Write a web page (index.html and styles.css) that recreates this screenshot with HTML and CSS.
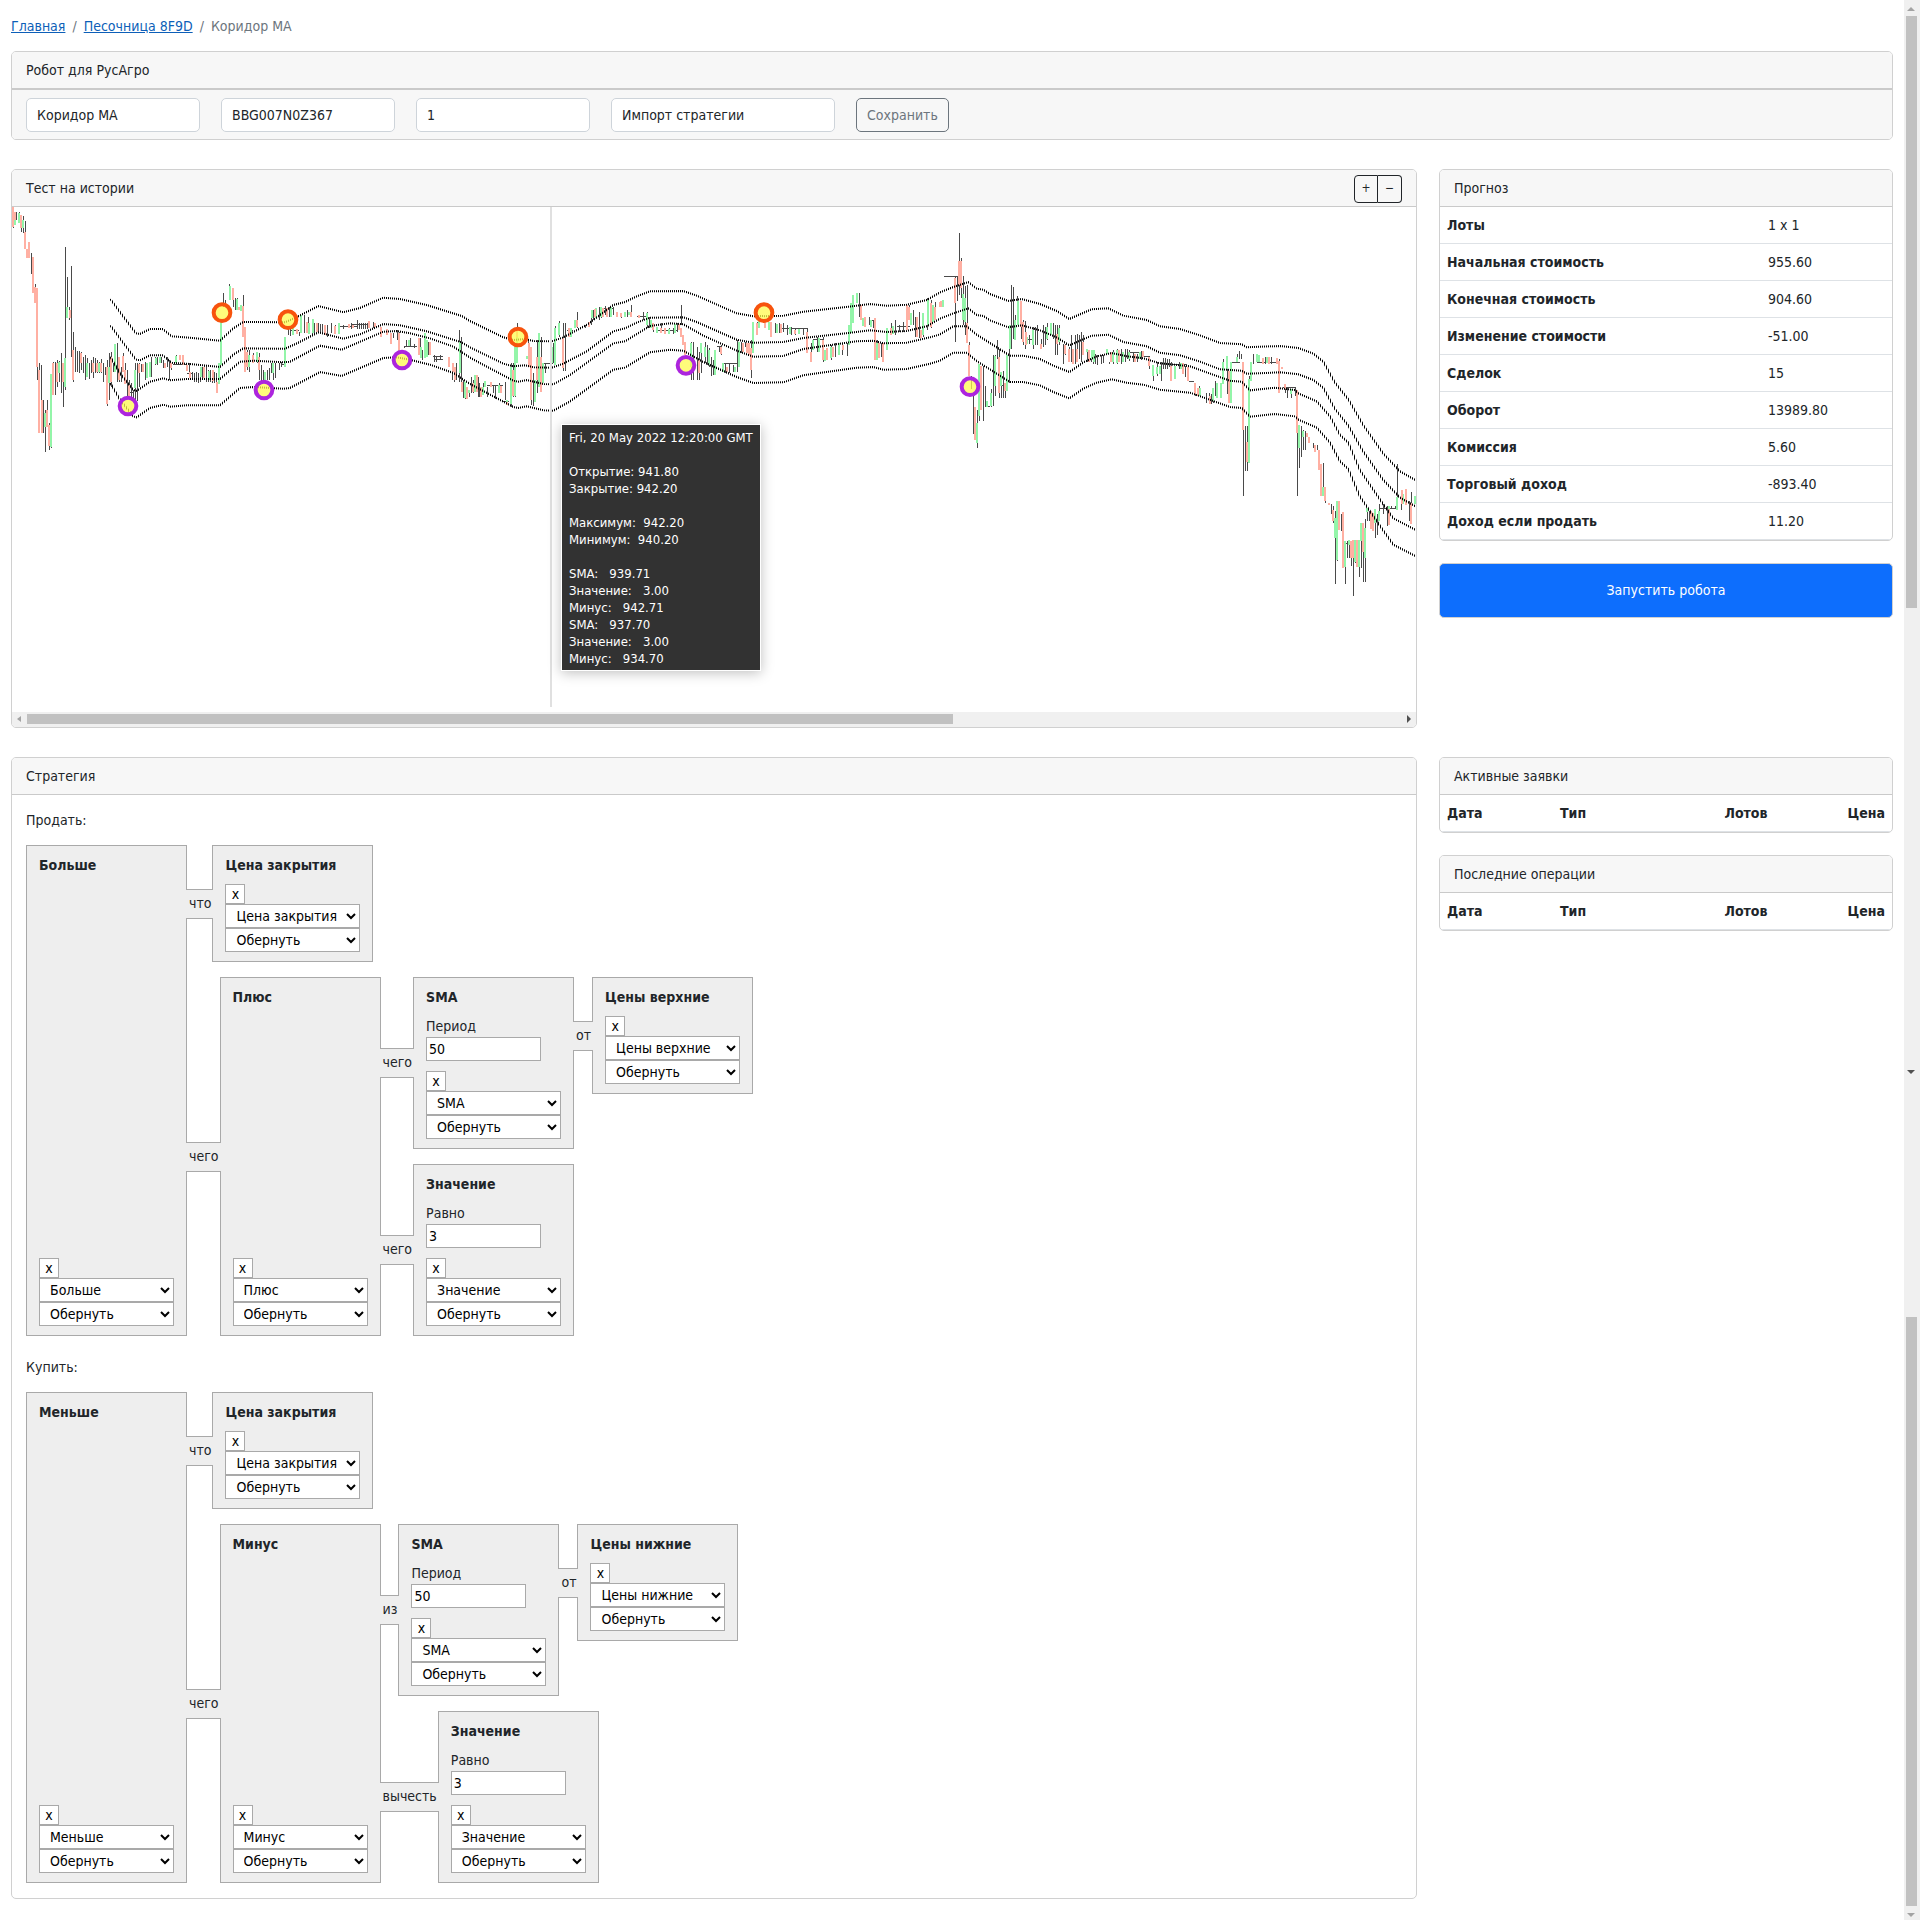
FILE: index.html
```
<!DOCTYPE html>
<html lang="ru">
<head>
<meta charset="utf-8">
<meta name="viewport" content="width=device-width, initial-scale=1">
<title>Коридор МА</title>
<link rel="stylesheet" href="styles.css">
</head>
<body>
<main class="page">
  <nav class="breadcrumb" aria-label="Навигация">
    <a href="#">Главная</a><span class="sep">/</span><a href="#">Песочница 8F9D</a><span class="sep">/</span><span class="current">Коридор МА</span>
  </nav>

  <section class="card robot">
    <header class="card-header">Робот для РусАгро</header>
    <form class="robot-form">
      <input class="field" type="text" value="Коридор МА" aria-label="Название">
      <input class="field" type="text" value="BBG007N0Z367" aria-label="FIGI">
      <input class="field" type="text" value="1" aria-label="Лоты">
      <input class="field field-wide" type="text" value="Импорт стратегии" aria-label="Импорт стратегии">
      <button class="btn-save" type="button">Сохранить</button>
    </form>
  </section>

  <div class="row">
    <section class="card wide">
      <header class="card-header with-tools">
        <span>Тест на истории</span>
        <span class="zoom"><button type="button">+</button><button type="button">−</button></span>
      </header>
      <div class="chart">
        <svg class="chart-svg" viewBox="0 0 4212 1515" role="img" aria-label="График цены">
          <defs>
            <pattern id="dots" width="6" height="6" patternUnits="userSpaceOnUse"><rect width="3" height="6" fill="#000"/></pattern>
            <g id="candles-a">
              <path class="w" d="M40 75V84M50 36V60M58 36V70M65 50V95M70 48V100M76 62V96M94 160V222M106 252V282M112 490V540M118 490V650M124 495V700M130 600V700M136 630V755M142 600V680M148 670V750M154 690V745M160 486V585M166 486V585M172 480V560M178 482V545M184 460V580M190 530V622M196 141V570M202 230V355M208 320V360M214 198V470M220 395V545M226 440V515M232 452V515M238 452V520M244 455V510M250 470V520M256 465V540M262 475V530M268 490V538M274 480V520M280 470V535M286 475V518M292 480V518M298 485V520M304 478V520M310 490V545M316 500V525M322 480V617M328 460V600M334 455V560M340 490V515M352 430V545M358 490V545M364 500V545M370 460V515M376 490V540M382 510V600M388 540V600M394 550V590M400 570V600M406 490V600M412 490V602M418 488V560M424 492V515M430 492V515M436 485V540M454 470V530M466 470V495M472 470V495M484 470V490M490 480V505M502 470V500M508 480V540M514 490V510M528 465V490M568 490V525M576 515V535M582 518V545M588 515V545M594 520V548M600 515V545M606 500V535M612 495V520M618 498V545M624 510V545M630 510V545M636 510V548M642 515V548M648 520V560M670 280V320M676 300V320M688 252V300M700 270V320M706 295V330M712 295V330M730 285V320M736 380V410M742 450V510M748 450V515M760 460V480M772 455V490M778 460V540M784 495V545M790 510V545M796 515V545M802 510V540M808 505V540M814 490V520M820 490V540M826 490V535M838 490V510M844 485V500M865 380V405M871 385V408M880 385V405M898 395V408M914 345V400M926 352V400M938 357V405M944 370V405M956 370V395M962 372V398M968 372V400M982 375V410M994 370V400M1006 375V402M1030 375V388M1054 370V388M1072 360V386M1078 368V388M1084 370V388M1090 370V388M1096 368V386M1102 370V388M1120 365V385M1144 380V412M1162 390V405M1180 400V415M1192 390V420M1198 395V460M1212 438V445M1220 420V440M1232 415V440M1244 432V445M1262 415V475M1268 450V480M1274 400V475M1286 425V465M1304 465V485M1310 470V487M1322 465V480M1346 470V500M1358 490V540M1364 500V545M1370 490V540M1378 390V545M1384 410V550M1390 540V595M1396 550V597M1408 575V590M1414 530V570M1420 540V580M1434 530V590"/>
              <path class="w" d="M380 578H398M520 492H560M560 520H580M845 492H856M870 392H898M1018 380H1070M1055 374H1110M1212 440H1250M1298 470H1330M1306 478H1330"/>
              <path class="g" d="M44 36V75M56 40V68M68 60V85M154 522V740M136 640V680M178 485V520M196 475V560M202 322V355M262 490V530M298 488V515M328 500V550M346 432V515M406 510V565M440 490V535M450 485V530M468 473V492M480 470V490M528 468V488M604 500V530M628 512V540M657 490V552M663 365V495M690 258V300M710 298V330M724 315V332M748 465V500M770 455V485M796 515V545M820 490V520M856 410V500M880 385V405M904 345V398M928 370V402M938 358V400M1016 368V402M1226 420V438M1262 440V475M1274 400V475M1280 420V470M1380 425V520M1396 545V595M1408 570V580M1424 525V575"/>
              <path class="r" d="M39 22V80M46 36V60M62 45V85M76 95V148M82 148V174M87 126V174M98 172V280M106 260V310M112 264V500M118 510V700M127 600V700M142 630V680M148 675V738M160 490V585M172 490V545M190 490V545M210 330V355M220 450V540M244 460V490M280 490V515M292 490V515M304 490V515M322 500V612M334 470V545M356 470V540M368 468V515M376 510V552M388 555V590M418 492V520M430 492V515M496 490V505M514 490V505M540 465V480M548 465V495M562 495V512M570 515V535M612 500V535M638 510V542M651 545V580M698 264V300M718 320V330M730 318V410M736 380V515M742 455V500M760 465V490M778 470V510M890 388V402M920 365V400M950 370V395M974 374V404M1006 378V402M1048 373V385M1060 375V385M1108 362V385M1126 368V382M1144 382V410M1162 388V404M1174 400V432M1196 400V455M1258 415V465M1290 425V465M1346 470V500M1358 490V515M1366 500V540M1386 545V575M1400 560V597M1430 525V560"/>
            </g>
            <g id="candles-b">
              <path class="w" d="M4 550V580M28 550V590M40 550V585M52 560V590M70 555V580M76 555V598M88 550V580M106 545V600M124 490V620M130 490V590M136 445V590M142 368V400M176 420V440M184 440V615M190 520V617M202 420V580M214 410V575M226 490V520M244 430V490M250 430V490M256 378V440M268 362V410M280 370V512M286 370V512M298 385V410M322 336V385M346 375V385M364 335V375M370 330V360M388 322V360M394 325V355M406 318V345M418 322V350M430 320V345M442 335V352M454 340V355M472 330V350M484 315V345M508 345V355M520 335V360M532 335V385M538 350V385M544 360V385M550 370V395M562 385V400M574 370V400M586 385V402M598 385V402M610 385V402M622 370V395M634 316V375M664 425V540M670 425V540M682 440V540M688 455V540M694 455V520M706 425V490M712 435V495M718 445V500M724 470V528M730 480V525M748 440V455M754 435V465M766 490V520M778 490V520M790 495V515M802 420V517M814 425V460M826 425V440M844 420V535M862 365V405M916 370V400M928 370V400M940 368V395M952 375V405M964 380V405M976 388V405M988 388V400M1000 385V405M1012 385V460M1024 430V465M1042 412V455M1060 412V485M1072 445V480M1084 435V480M1096 430V470M1108 430V460M1118 430V465M1132 430V468M1144 330V400M1162 280V310M1168 280V350M1186 350V375M1198 350V375M1210 360V385M1222 420V470M1234 430V470M1252 385V420M1264 370V405M1276 360V405M1288 375V395M1300 365V395M1318 315V360M1330 330V375M1336 350V410M1348 335V415M1360 340V410M1372 295V390M1384 300V385M1396 305V360M50 556H100M100 605H118M218 490H250M290 390H310M400 325H430M500 350H530M560 390H620M740 440H756M758 490H800M930 385H1010M1030 418H1060M1200 360H1216M1280 380H1320M1422 228H1440"/>
              <path class="g" d="M40 560V585M46 543V560M88 556V580M112 600V612M124 500V612M136 440V588M142 405V490M172 468V476M196 540V605M208 400V560M220 490V550M246 440V490M254 385V495M268 370V405M304 385V410M316 360V385M366 330V355M378 325V355M392 322V352M424 322V350M466 335V352M478 335V345M532 340V375M544 360V385M560 380V398M598 388V402M616 372V398M664 428V500M694 430V460M706 440V470M718 450V495M736 450V525M760 490V515M796 500V515M806 425V500M850 365V460M868 362V385M898 365V390M922 372V398M960 380V402M988 388V402M1030 420V450M1046 415V455M1066 450V482M1084 440V475M1108 430V465M1138 375V435M1144 310V400M1150 285V370M1160 280V310M1180 355V378M1204 360V380M1222 430V480M1252 385V450M1268 378V402M1324 340V375M1360 340V405M1374 300V375M1388 315V365M1420 300V322"/>
              <path class="r" d="M10 550V575M22 525V575M34 560V590M64 545V562M94 558V580M112 605V615M130 510V588M142 390V410M178 428V500M184 440V600M202 470V540M214 470V575M280 415V505M298 385V410M322 360V380M358 365V382M376 328V350M400 325V352M412 325V352M442 335V352M454 338V352M484 335V350M508 345V355M550 370V390M574 385V400M586 385V402M628 372V390M634 385V410M640 405V435M646 425V465M688 480V520M754 440V462M772 500V515M820 428V455M830 430V460M838 430V465M844 445V510M860 370V405M886 365V385M904 365V410M934 372V400M976 390V402M1012 395V460M1024 455V485M1058 420V480M1072 445V480M1090 440V470M1120 435V450M1174 315V360M1186 350V380M1216 355V480M1228 430V475M1240 430V485M1264 385V405M1312 315V390M1318 320V360M1342 350V410M1354 390V415M1382 310V380M1396 320V360M1410 305V322"/>
            </g>
            <g id="candles-c">
              <path class="w" d="M46 228V421M52 225V300M58 98V280M64 172V290M70 225V370M76 255V400M82 250V390M88 420V520M94 520V560M100 580V692M112 620V735M118 490V655M130 490V655M136 550V612M154 560V612M160 460V610M166 460V580M172 415V470M178 440V587M184 510V585M190 505V585M196 560V585M208 370V540M214 250V440M220 258V410M226 340V370M232 285V370M244 300V410M250 355V430M256 358V440M268 400V425M280 375V440M286 375V430M292 370V430M304 410V440M310 370V435M316 375V430M322 365V415M340 365V410M346 370V458M352 370V458M358 370V430M370 425V485M376 425V460M388 435V480M394 400V480M406 400V485M412 395V480M418 400V470M424 390V480M430 400V460M442 440V480M454 445V480M460 460V486M466 455V484M472 460V487M484 460V485M490 460V483M508 480V484M520 445V484M532 440V484M544 440V484M556 440V480M562 440V470M568 445V475M580 450V480M592 455V478M604 448V472M628 465V500M640 490V535M652 480V520M664 480V535M670 468V500M676 468V500M682 470V500M688 470V495M694 480V535M706 490V530M718 480V500M736 490V525M766 540V580M778 550V580M800 570V600M808 572V605M814 575V605M820 555V600M826 535V580M832 540V585M850 470V545M862 480V575M874 480V600M892 455V480M898 448V470M904 455V470M910 660V875M916 668V802M922 668V802M928 520V640M934 485V535M940 455V485M952 468V480M976 465V485M994 465V485M1018 470V572M1036 550V570M1042 555V587M1054 560V587M1066 555V580M1072 680V875M1078 670V792M1084 670V760M1090 680V740M1096 682V740M1120 720V735M1126 725V745M1132 725V740M1150 778V875M1156 850V895M1174 900V930M1180 905V955M1186 920V1135M1192 950V1068M1204 930V978M1216 1010V1135M1222 1010V1058M1228 1005V1060M1234 1010V1082M1240 1005V1172M1246 1005V1075M1252 1005V1075M1258 1010V1115M1264 955V1090M1270 980V1130M1276 945V1130M1282 915V950M1288 920V950M1300 925V970M1306 935V1000M1312 930V990M1318 900V950M1330 900V930M1342 905V965M1354 905V915M1366 905V915M1372 780V880M1384 860V918M1396 855V900M1408 890V950M1414 865V950M12 225H54M134 610H150M185 550H200M262 412H276M560 450H610M610 462H630M680 488H740M746 537H762M876 480H900M950 480H1010M1030 555H1068M1216 1015H1228M1320 912H1368"/>
              <path class="g" d="M10 296V318M70 278V355M76 290V360M112 660V718M118 485V640M142 595V612M152 570V608M164 462V550M184 510V550M202 460V565M210 370V440M224 355V415M234 300V370M262 405V425M278 385V430M322 375V410M334 365V400M358 380V420M442 440V450M456 445V470M462 445V480M502 440V455M520 450V480M532 445V482M548 450V480M566 450V470M600 450V470M640 488V520M650 495V515M660 490V515M706 490V530M724 482V500M780 555V580M820 555V595M830 540V585M844 540V585M850 480V545M862 462V500M874 480V600M892 465V480M928 530V778M934 480V535M952 455V480M958 458V480M980 465V482M1054 560V575M1078 665V735M1090 682V700M1150 850V875M1186 940V1000M1192 892V1065M1216 1010V1085M1228 1005V1020M1246 1005V1070M1258 1005V1085M1264 955V1010M1276 970V1058M1282 912V922M1306 915V955M1318 920V950M1348 905V920M1372 880V918M1390 870V900M1426 875V900"/>
              <path class="r" d="M3 300V318M46 230V305M58 180V250M64 180V260M82 365V422M87 430V522M106 612V710M124 490V620M178 465V570M196 540V565M242 300V375M250 360V420M258 390V430M304 425V440M350 395V425M376 430V455M388 440V480M398 440V485M412 440V480M430 420V460M446 445V480M514 450V480M536 445V480M584 455V478M610 448V465M628 465V490M694 490V535M730 482V515M744 495V535M766 540V575M774 555V580M810 580V604M868 505V602M910 480V680M922 715V775M968 468V485M988 465V485M1010 468V485M1018 475V570M1026 495V500M1036 545V560M1072 562V688M1102 690V700M1108 700V718M1126 725V745M1138 740V798M1144 780V875M1156 850V892M1168 895V902M1180 918V950M1198 892V975M1210 922V1090M1234 1008V1060M1240 1005V1060M1252 1005V1085M1270 955V1040M1294 920V972M1300 925V978M1346 915V962M1386 858V900M1398 855V902M1412 895V958"/>
            </g>
            <path id="ma-high" d="M295 276L334 329 372 379 384 381 414 366 452 366 479 388 534 392 624 401 664 364 694 345 819 346 857 329 919 297 994 316 1044 303 1114 272 1164 276 1244 294 1349 327 1374 342 1474 391 1504 399 1539 396 1564 402 1619 403 1654 391 1724 354 1804 294 1839 285 1874 268 1914 253 2014 252 2054 266 2174 319 2224 328 2314 326 2374 314 2509 299 2574 291 2624 296 2684 293 2744 279 2784 256 2824 240 2869 225 2894 245 2914 248 2934 261 2989 282 3029 276 3084 291 3134 312 3172 336 3199 324 3239 307 3289 304 3334 326 3404 339 3444 358 3504 366 3564 385 3624 408 3689 412 3704 421 3804 417 3859 423 3904 440 3934 464 3969 527 4009 577 4054 655 4114 740 4164 793 4212 820"/>
            <path id="ma-low" d="M295 449L324 499 364 549 374 552 414 524 454 514 474 520 524 516 624 516 684 464 724 461 814 466 834 464 924 416 989 428 1114 374 1154 372 1194 379 1254 394 1324 419 1374 452 1434 484 1504 521 1519 524 1544 519 1594 531 1624 532 1674 504 1804 409 1839 403 1914 357 1974 349 2014 352 2074 386 2174 431 2224 449 2314 447 2374 426 2534 403 2584 401 2614 409 2684 407 2754 391 2784 382 2824 358 2864 358 2894 383 2994 446 3034 446 3084 456 3124 476 3172 495 3214 466 3254 448 3299 438 3344 448 3394 454 3444 469 3534 478 3584 496 3654 521 3689 524 3714 550 3789 542 3849 549 3859 559 3914 583 3954 628 3984 684 4009 707 4044 790 4114 892 4144 934 4212 969"/>
          </defs>
          <use href="#candles-a" transform="translate(-36 -21)"/>
          <use href="#candles-b" transform="translate(1374 -21)"/>
          <use href="#candles-c" transform="translate(2784 -21) scale(1 1.014)"/>
          <g class="ma">
            <use href="#ma-high"/><use href="#ma-high" transform="translate(0 79)"/>
            <use href="#ma-low"/><use href="#ma-low" transform="translate(0 79)"/>
          </g>
          <rect class="cursor" x="1614" y="0" width="6" height="1500"/>
          <g class="deal sell">
            <circle cx="630" cy="317" r="25"/><circle cx="828" cy="338" r="25"/><circle cx="1518" cy="390" r="25"/><circle cx="2256" cy="317" r="25"/>
          </g>
          <g class="deal buy">
            <circle cx="348" cy="597" r="25"/><circle cx="756" cy="549" r="25"/><circle cx="1170" cy="459" r="25"/><circle cx="2022" cy="475" r="25"/><circle cx="2874" cy="539" r="25"/>
          </g>
        </svg>
        <pre class="tooltip">Fri, 20 May 2022 12:20:00 GMT

Открытие: 941.80
Закрытие: 942.20

Максимум:  942.20
Минимум:  940.20

SMA:   939.71
Значение:   3.00
Минус:   942.71
SMA:   937.70
Значение:   3.00
Минус:   934.70</pre>
      </div>
      <div class="hbar" aria-hidden="true">
        <svg class="arrow" viewBox="0 0 14 14"><path d="M9 4V10L5 7Z" fill="#a3a3a3"/></svg>
        <div class="hbar-track"><div class="hbar-thumb"></div></div>
        <svg class="arrow" viewBox="0 0 14 14"><path d="M5 3V11L9 7Z" fill="#505050"/></svg>
      </div>
    </section>

    <div class="side">
      <section class="card">
        <header class="card-header">Прогноз</header>
        <table class="table forecast">
          <tr><th scope="row">Лоты</th><td>1 x 1</td></tr>
          <tr><th scope="row">Начальная стоимость</th><td>955.60</td></tr>
          <tr><th scope="row">Конечная стоимость</th><td>904.60</td></tr>
          <tr><th scope="row">Изменение стоимости</th><td>-51.00</td></tr>
          <tr><th scope="row">Сделок</th><td>15</td></tr>
          <tr><th scope="row">Оборот</th><td>13989.80</td></tr>
          <tr><th scope="row">Комиссия</th><td>5.60</td></tr>
          <tr><th scope="row">Торговый доход</th><td>-893.40</td></tr>
          <tr><th scope="row">Доход если продать</th><td>11.20</td></tr>
        </table>
      </section>
      <button class="btn-run" type="button">Запустить робота</button>
    </div>
  </div>

  <div class="row">
    <section class="card wide">
      <header class="card-header">Стратегия</header>
      <div class="strategy">
        <p class="rule">Продать:</p>
        <div class="node">
          <div class="box">
            <b class="title">Больше</b>
            <div class="ops"><button type="button">x</button><select aria-label="Блок"><option>Больше</option></select><select aria-label="Обернуть"><option>Обернуть</option></select></div>
          </div>
          <div class="children">
            <div class="branch"><span class="link">что</span>
              <div class="node"><div class="box">
                <b class="title">Цена закрытия</b>
                <div class="ops"><button type="button">x</button><select aria-label="Блок"><option>Цена закрытия</option></select><select aria-label="Обернуть"><option>Обернуть</option></select></div>
              </div></div>
            </div>
            <div class="branch"><span class="link">чего</span>
              <div class="node">
                <div class="box">
                  <b class="title">Плюс</b>
                  <div class="ops"><button type="button">x</button><select aria-label="Блок"><option>Плюс</option></select><select aria-label="Обернуть"><option>Обернуть</option></select></div>
                </div>
                <div class="children">
                  <div class="branch"><span class="link">чего</span>
                    <div class="node">
                      <div class="box">
                        <b class="title">SMA</b>
                        <label class="param">Период<input type="text" value="50"></label>
                        <div class="ops"><button type="button">x</button><select aria-label="Блок"><option>SMA</option></select><select aria-label="Обернуть"><option>Обернуть</option></select></div>
                      </div>
                      <div class="children">
                        <div class="branch"><span class="link">от</span>
                          <div class="node"><div class="box">
                            <b class="title">Цены верхние</b>
                            <div class="ops"><button type="button">x</button><select aria-label="Блок"><option>Цены верхние</option></select><select aria-label="Обернуть"><option>Обернуть</option></select></div>
                          </div></div>
                        </div>
                      </div>
                    </div>
                  </div>
                  <div class="branch"><span class="link">чего</span>
                    <div class="node"><div class="box">
                      <b class="title">Значение</b>
                      <label class="param">Равно<input type="text" value="3"></label>
                      <div class="ops"><button type="button">x</button><select aria-label="Блок"><option>Значение</option></select><select aria-label="Обернуть"><option>Обернуть</option></select></div>
                    </div></div>
                  </div>
                </div>
              </div>
            </div>
          </div>
        </div>

        <p class="rule">Купить:</p>
        <div class="node">
          <div class="box">
            <b class="title">Меньше</b>
            <div class="ops"><button type="button">x</button><select aria-label="Блок"><option>Меньше</option></select><select aria-label="Обернуть"><option>Обернуть</option></select></div>
          </div>
          <div class="children">
            <div class="branch"><span class="link">что</span>
              <div class="node"><div class="box">
                <b class="title">Цена закрытия</b>
                <div class="ops"><button type="button">x</button><select aria-label="Блок"><option>Цена закрытия</option></select><select aria-label="Обернуть"><option>Обернуть</option></select></div>
              </div></div>
            </div>
            <div class="branch"><span class="link">чего</span>
              <div class="node">
                <div class="box">
                  <b class="title">Минус</b>
                  <div class="ops"><button type="button">x</button><select aria-label="Блок"><option>Минус</option></select><select aria-label="Обернуть"><option>Обернуть</option></select></div>
                </div>
                <div class="children">
                  <div class="branch"><span class="link">из</span>
                    <div class="node">
                      <div class="box">
                        <b class="title">SMA</b>
                        <label class="param">Период<input type="text" value="50"></label>
                        <div class="ops"><button type="button">x</button><select aria-label="Блок"><option>SMA</option></select><select aria-label="Обернуть"><option>Обернуть</option></select></div>
                      </div>
                      <div class="children">
                        <div class="branch"><span class="link">от</span>
                          <div class="node"><div class="box">
                            <b class="title">Цены нижние</b>
                            <div class="ops"><button type="button">x</button><select aria-label="Блок"><option>Цены нижние</option></select><select aria-label="Обернуть"><option>Обернуть</option></select></div>
                          </div></div>
                        </div>
                      </div>
                    </div>
                  </div>
                  <div class="branch"><span class="link">вычесть</span>
                    <div class="node"><div class="box">
                      <b class="title">Значение</b>
                      <label class="param">Равно<input type="text" value="3"></label>
                      <div class="ops"><button type="button">x</button><select aria-label="Блок"><option>Значение</option></select><select aria-label="Обернуть"><option>Обернуть</option></select></div>
                    </div></div>
                  </div>
                </div>
              </div>
            </div>
          </div>
        </div>
      </div>
    </section>

    <div class="side">
      <section class="card">
        <header class="card-header">Активные заявки</header>
        <table class="table orders">
          <tr><th scope="col">Дата</th><th scope="col">Тип</th><th scope="col" class="num">Лотов</th><th scope="col" class="num">Цена</th></tr>
        </table>
      </section>
      <section class="card">
        <header class="card-header">Последние операции</header>
        <table class="table orders">
          <tr><th scope="col">Дата</th><th scope="col">Тип</th><th scope="col" class="num">Лотов</th><th scope="col" class="num">Цена</th></tr>
        </table>
      </section>
    </div>
  </div>
</main>

<div class="vbar" aria-hidden="true">
  <div class="vbar-part upper">
    <svg class="arrow" viewBox="0 0 14 14"><path d="M3 9H11L7 5Z" fill="#a3a3a3"/></svg>
    <div class="vbar-thumb"></div>
    <svg class="arrow" viewBox="0 0 14 14"><path d="M3 5H11L7 9Z" fill="#505050"/></svg>
  </div>
  <div class="vbar-part lower">
    <div class="vbar-thumb"></div>
    <svg class="arrow" viewBox="0 0 14 14"><path d="M3 7H11L7 11Z" fill="#a3a3a3"/></svg>
  </div>
</div>
</body>
</html>
```
FILE: styles.css
```
* { box-sizing: border-box; }
body {
  margin: 0;
  display: flex;
  min-height: 100vh;
  background: #fff;
  color: #212529;
  font: 14px/21px Tahoma, "DejaVu Sans Condensed", "Noto Sans", sans-serif;
}
input, select, button { font: inherit; }

.page {
  flex: 1;
  min-width: 0;
  padding: 16px 11px 21px;
}
.breadcrumb {
  display: flex;
  gap: 7px;
  margin-bottom: 14px;
}
.breadcrumb a { color: #0d5fb8; }
.sep, .current { color: #6c757d; }

.card {
  border: 1px solid #d0d0d0;
  border-radius: 5px;
  background: #fff;
  overflow: hidden;
}
.card-header {
  padding: 8px 14px 7px;
  background: #f7f7f7;
  border-bottom: 1px solid #cacaca;
}
.row {
  display: grid;
  grid-template-columns: repeat(4, 1fr);
  gap: 22px;
  align-items: start;
  margin-top: 29px;
}
.wide { grid-column: span 3; }
.side {
  display: flex;
  flex-direction: column;
  gap: 22px;
}

.robot .card-header { border-bottom-width: 2px; }
.robot-form {
  display: flex;
  gap: 21px;
  padding: 8px 14px 7px;
  background: #f7f7f7;
}
.field {
  width: 174px;
  height: 34px;
  padding: 0 10px 1px;
  border: 1px solid #ced4da;
  border-radius: 5px;
  background: #fff;
  color: #212529;
}
.field-wide { width: 224px; }
.btn-save {
  height: 34px;
  padding: 0 10px;
  border: 1px solid #6c757d;
  border-radius: 5px;
  background: transparent;
  color: #6c757d;
}

.with-tools {
  display: flex;
  justify-content: space-between;
  align-items: center;
  height: 37px;
}
.zoom { display: flex; }
.zoom button {
  width: 24px;
  height: 28px;
  padding: 0;
  border: 1px solid #212529;
  background: transparent;
  color: #212529;
  font-size: 12px;
}
.zoom button:first-child { border-radius: 4px 0 0 4px; }
.zoom button:last-child { border-radius: 0 4px 4px 0; border-left: 0; }

.chart {
  position: relative;
  overflow: hidden;
}
.chart-svg {
  display: block;
  width: 1404px;
  height: 505px;
}
.w, .g, .r { fill: none; stroke-width: 6; shape-rendering: crispEdges; }
.w { stroke: #4a4a4a; stroke-width: 3; }
.g { stroke: #93f5a9; }
.r { stroke: #ffb0a3; }
.ma { fill: none; stroke: url(#dots); stroke-width: 6; }
.cursor { fill: #e0e0e0; }
.deal circle { fill: #fff94f; fill-opacity: .75; stroke-width: 12; }
.sell circle { stroke: #f7530d; }
.buy circle { stroke: #ac25de; }
.tooltip {
  position: absolute;
  left: 549px;
  top: 217px;
  margin: 0;
  padding: 4px 7px 3px;
  border: 1px solid #fff;
  background: #323232;
  color: #fff;
  font: 13px/17px Tahoma, "DejaVu Sans Condensed", "Noto Sans", sans-serif;
  box-shadow: 0 2px 12px rgba(0, 0, 0, .25);
}
.hbar {
  display: flex;
  height: 15px;
  background: #f0f0f0;
}
.arrow { display: block; flex: none; width: 14px; height: 14px; }
.hbar-track { flex: 1; padding: 2px 1px; }
.hbar-thumb { width: 67.4%; height: 10px; background: #c1c1c1; }

.table { width: 100%; border-collapse: separate; border-spacing: 0; }
.table th, .table td {
  height: 37px;
  padding: 7px;
  border-bottom: 1px solid #dee2e6;
  text-align: left;
}
.forecast td { width: 29%; }
.orders th:nth-child(1) { width: 25%; }
.orders th:nth-child(2) { width: 25%; }
.orders th:nth-child(3) { width: 24%; }
.table .num { text-align: right; }
.btn-run {
  height: 55px;
  border: 1px solid #d0d0d0;
  border-radius: 5px;
  background: #0d6efd;
  color: #fff;
}

.strategy { padding: 15px 14px; }
.rule { margin: 0 0 14px; }
.node + .rule { margin-top: 21px; }
.node { display: flex; }
.box {
  display: flex;
  flex-direction: column;
  width: 161px;
  padding: 9px 12px;
  border: 1px solid #a9a9a9;
  background: #eee;
}
.title { margin-bottom: 8px; }
.children {
  display: flex;
  flex-direction: column;
  align-items: flex-start;
  gap: 15px;
}
.branch { display: flex; align-items: center; }
.link {
  position: relative;
  margin: 0 -1px;
  padding: 3px 2px 4px 3px;
  border: solid #a9a9a9;
  border-width: 1px 0;
  background: #eee;
}
.param { display: block; margin-bottom: 10px; }
.param input {
  display: block;
  width: 115px;
  height: 24px;
  padding: 0 2px;
  border: 1px solid #a9a9a9;
  background: #fff;
  color: #000;
}
.ops { margin-top: auto; display: flex; flex-direction: column; align-items: stretch; }
.ops button {
  align-self: flex-start;
  width: 20px;
  height: 20px;
  padding: 0;
  border: 1px solid #a9a9a9;
  background: #fff;
  color: #000;
  line-height: 17px;
}
.ops select {
  width: 100%;
  height: 24px;
  padding: 0 0 0 6px;
  border: 1px solid #a9a9a9;
  border-radius: 0;
  background-color: #fff;
  color: #000;
}

.vbar {
  display: flex;
  flex-direction: column;
  width: 16px;
  background: #f0f0f0;
}
.vbar-part { display: flex; flex-direction: column; }
.upper { flex: 1078; padding-top: 2px; }
.lower { flex: 842; justify-content: flex-end; }
.vbar-thumb { margin-left: 2px; width: 11px; background: #c1c1c1; }
.upper .vbar-thumb { height: 55%; }
.upper .arrow:last-child { margin-top: auto; }
.lower .vbar-thumb { height: 70%; }
```
